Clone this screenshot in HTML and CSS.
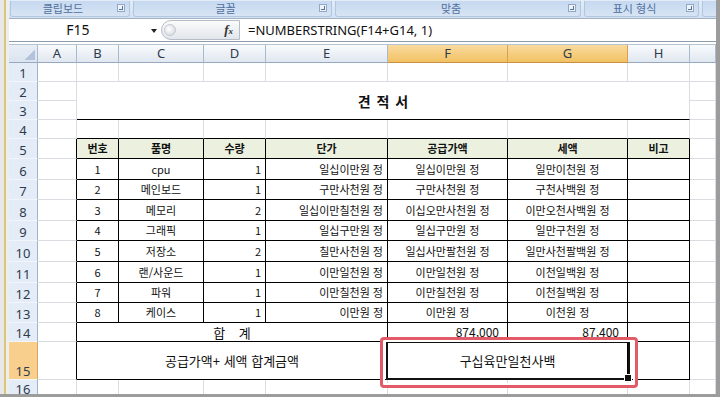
FILE: index.html
```html
<!DOCTYPE html>
<html lang="ko">
<head>
    <meta charset="UTF-8">
    <meta name="viewport" content="width=device-width, initial-scale=1.0">
    <link rel="stylesheet" href="styles.css">
    <title>견적서 - NUMBERSTRING</title>
</head>
<body>
    <div class="window">
        <div class="rail"></div>
        <div class="main">
            <div class="ribbon">
                <div class="group g1">클립보드<i class="launch"></i></div>
                <div class="group g2">글꼴<i class="launch"></i></div>
                <div class="group g3">맞춤<i class="launch"></i></div>
                <div class="group g4">표시 형식<i class="launch"></i></div>
                <div class="group g5"></div>
            </div>
            <div class="formula-bar">
                <div class="namebox">F15<span class="caret"></span></div>
                <div class="fx-pill"><span class="grip"></span><span class="fx">f<small>x</small></span></div>
                <div class="formula">=NUMBERSTRING(F14+G14, 1)</div>
            </div>
            <div class="split"></div>
            <div class="grid-wrap">
            <table class="sheet">
                <colgroup>
                    <col class="w-rh"><col class="w-a"><col class="w-b"><col class="w-c"><col class="w-d">
                    <col class="w-e"><col class="w-f"><col class="w-g"><col class="w-h"><col class="w-i">
                </colgroup>
                <tr class="hd">
                    <th class="corner"></th><th>A</th><th>B</th><th>C</th><th>D</th><th>E</th>
                    <th class="on">F</th><th class="on">G</th><th>H</th><th></th>
                </tr>
                <tr class="r19"><th class="rh">1</th><td></td><td></td><td></td><td></td><td></td><td></td><td></td><td></td><td></td></tr>
                <tr class="r19"><th class="rh">2</th><td></td><td class="title" colspan="7" rowspan="2">견 적 서</td><td></td></tr>
                <tr class="r19"><th class="rh">3</th><td></td><td></td></tr>
                <tr class="r19"><th class="rh">4</th><td></td><td class="top"></td><td class="top"></td><td class="top"></td><td class="top"></td><td class="top"></td><td class="top"></td><td class="top"></td><td></td></tr>
                <tr class="r20">
                    <th class="rh">5</th><td class="edge"></td>
                    <td class="t th">번호</td><td class="t th">품명</td><td class="t th">수량</td><td class="t th">단가</td>
                    <td class="t th">공급가액</td><td class="t th">세액</td><td class="t th">비고</td><td></td>
                </tr>
                <tr class="r21"><th class="rh">6</th><td class="edge"></td><td class="t">1</td><td class="t">cpu</td><td class="t num">1</td><td class="t num">일십이만원 정</td><td class="t">일십이만원 정</td><td class="t">일만이천원 정</td><td class="t"></td><td></td></tr>
                <tr class="r20"><th class="rh">7</th><td class="edge"></td><td class="t">2</td><td class="t">메인보드</td><td class="t num">1</td><td class="t num">구만사천원 정</td><td class="t">구만사천원 정</td><td class="t">구천사백원 정</td><td class="t"></td><td></td></tr>
                <tr class="r21"><th class="rh">8</th><td class="edge"></td><td class="t">3</td><td class="t">메모리</td><td class="t num">2</td><td class="t num">일십이만칠천원 정</td><td class="t">이십오만사천원 정</td><td class="t">이만오천사백원 정</td><td class="t"></td><td></td></tr>
                <tr class="r20"><th class="rh">9</th><td class="edge"></td><td class="t">4</td><td class="t">그래픽</td><td class="t num">1</td><td class="t num">일십구만원 정</td><td class="t">일십구만원 정</td><td class="t">일만구천원 정</td><td class="t"></td><td></td></tr>
                <tr class="r21"><th class="rh">10</th><td class="edge"></td><td class="t">5</td><td class="t">저장소</td><td class="t num">2</td><td class="t num">칠만사천원 정</td><td class="t">일십사만팔천원 정</td><td class="t">일만사천팔백원 정</td><td class="t"></td><td></td></tr>
                <tr class="r21"><th class="rh">11</th><td class="edge"></td><td class="t">6</td><td class="t">랜/사운드</td><td class="t num">1</td><td class="t num">이만일천원 정</td><td class="t">이만일천원 정</td><td class="t">이천일백원 정</td><td class="t"></td><td></td></tr>
                <tr class="r20"><th class="rh">12</th><td class="edge"></td><td class="t">7</td><td class="t">파워</td><td class="t num">1</td><td class="t num">이만칠천원 정</td><td class="t">이만칠천원 정</td><td class="t">이천칠백원 정</td><td class="t"></td><td></td></tr>
                <tr class="r20"><th class="rh">13</th><td class="edge"></td><td class="t">8</td><td class="t">케이스</td><td class="t num">1</td><td class="t num">이만원 정</td><td class="t">이만원 정</td><td class="t">이천원 정</td><td class="t"></td><td></td></tr>
                <tr class="r19">
                    <th class="rh">14</th><td class="edge"></td>
                    <td class="t sum" colspan="4">합 계</td>
                    <td class="t num total">874,000</td><td class="t num total">87,400</td><td class="t"></td><td></td>
                </tr>
                <tr class="r38">
                    <th class="rh on">15</th><td class="edge"></td>
                    <td class="t big" colspan="4">공급가액+ 세액 합계금액</td>
                    <td class="t big picked" colspan="2">구십육만일천사백<span class="sel"></span></td>
                    <td class="t"></td><td></td>
                </tr>
                <tr class="r20"><th class="rh last">16</th><td></td><td></td><td></td><td></td><td></td><td></td><td></td><td></td><td></td></tr>
            </table>
            </div>
        </div>
        <div class="mark"></div>
    </div>
</body>
</html>
```

FILE: styles.css
```css
* {
    box-sizing: border-box;
}

body {
    margin: 0;
    background-color: #fff;
    font-family: 'Noto Sans', 'Noto Sans CJK KR', sans-serif;
    color: #111;
}

.window {
    position: relative;
    display: flex;
    width: 720px;
    height: 397px;
    border-right: 4px solid #9c9c9c;
    border-bottom: 3px solid #9c9c9c;
    overflow: hidden;
}

.rail {
    flex: 0 0 9px;
    background: linear-gradient(to right, #e8e8e8 0 4px, #d8c67a 4px 6px, #eeeeee 6px);
}

.main {
    flex: 1;
    min-width: 0;
    display: flex;
    flex-direction: column;
}

/* ribbon group captions */
.ribbon {
    flex: none;
    height: 19px;
    display: flex;
    gap: 3px;
    padding: 1px 0 0 1px;
    background: linear-gradient(#e3ecf7, #d4e1f1);
    border-bottom: 1px solid #a3b1c3;
    overflow: hidden;
}

.group {
    position: relative;
    flex: none;
    height: 16px;
    padding-right: 14px;
    border: 1px solid #b1c6e0;
    border-top: none;
    border-radius: 0 0 3px 3px;
    background: linear-gradient(#c6d9f0, #d7e4f4);
    font-family: 'Noto Sans CJK KR', sans-serif;
    font-size: 11px;
    line-height: 15px;
    text-align: center;
    color: #4f6f9c;
}

.g1 { width: 120px; }
.g2 { width: 199px; }
.g3 { width: 246px; }
.g4 { width: 115px; }
.g5 { width: 30px; }

.launch {
    position: absolute;
    right: 4px;
    top: 3px;
    width: 8px;
    height: 8px;
    border: 1px solid #93a8c4;
    background-color: #eef3fa;
}

.launch::after {
    content: '';
    position: absolute;
    right: 1px;
    bottom: 1px;
    width: 3px;
    height: 3px;
    border-right: 1px solid #5c7396;
    border-bottom: 1px solid #5c7396;
}

/* formula bar */
.formula-bar {
    flex: none;
    height: 22px;
    display: flex;
    background-color: #fff;
}

.namebox {
    position: relative;
    width: 152px;
    padding-right: 14px;
    font-size: 14px;
    line-height: 22px;
    text-align: center;
}

.caret {
    position: absolute;
    right: 4px;
    top: 10px;
    border-left: 3px solid transparent;
    border-right: 3px solid transparent;
    border-top: 4px solid #222;
}

.fx-pill {
    width: 79px;
    height: 20px;
    margin-top: 1px;
    display: flex;
    align-items: center;
    justify-content: space-between;
    padding: 0 6px 0 2px;
    border: 1px solid #b4bdc8;
    border-radius: 10px 0 0 10px;
    background: linear-gradient(#fbfbfc, #e2e6eb);
}

.grip {
    width: 12px;
    height: 12px;
    border-radius: 50%;
    border: 1px solid #c3cad3;
    background: radial-gradient(circle at 40% 40%, #ffffff, #cdd3db);
}

.fx {
    font-family: 'Liberation Serif', serif;
    font-style: italic;
    font-weight: bold;
    font-size: 13px;
    color: #333;
}

.fx small {
    font-size: 9px;
}

.formula {
    padding-left: 8px;
    font-size: 13px;
    line-height: 22px;
    white-space: nowrap;
}

.split {
    flex: none;
    height: 4px;
    border-top: 1px solid #8e9bad;
    border-bottom: 1px solid #b8c3d0;
}

/* worksheet */
.grid-wrap {
    flex: 1;
    min-height: 0;
    overflow: hidden;
}

.sheet {
    width: 707px;
    table-layout: fixed;
    border-collapse: separate;
    border-spacing: 0;
    font-family: 'Noto Sans CJK KR', sans-serif;
    font-size: 11px;
}

.w-rh { width: 29px; }
.w-a { width: 39px; }
.w-b { width: 42px; }
.w-c { width: 85px; }
.w-d { width: 62px; }
.w-e { width: 122px; }
.w-f { width: 120px; }
.w-g { width: 120px; }
.w-h { width: 62px; }
.w-i { width: 26px; }

.sheet tr.hd { height: 18px; }
.sheet tr.r19 { height: 19px; }
.sheet tr.r20 { height: 20px; }
.sheet tr.r21 { height: 21px; }
.sheet tr.r38 { height: 38px; }

.sheet td {
    padding: 0;
    line-height: 1;
    text-align: center;
    vertical-align: middle;
    white-space: nowrap;
    border-right: 1px solid #d9dce1;
    border-bottom: 1px solid #d9dce1;
}

.hd th {
    padding: 0;
    font-family: 'Noto Sans', sans-serif;
    font-weight: normal;
    font-size: 13px;
    line-height: 1;
    color: #2f3b4b;
    background: linear-gradient(#f9fbfd, #e0e7f0);
    border-right: 1px solid #a9bacd;
    border-bottom: 1px solid #97a9c0;
}

.hd th.on {
    background: linear-gradient(#f9da9f, #f2c264);
    border-right-color: #dca14f;
    border-bottom-color: #c8913f;
}

.hd th.corner {
    background:
        linear-gradient(135deg, transparent 50%, #b3c4da 50%) no-repeat right 2px bottom 2px / 10px 10px,
        linear-gradient(#e8eef6, #dbe4ef);
}

.rh {
    padding: 0 0 1px 0;
    font-family: 'Noto Sans', sans-serif;
    font-weight: normal;
    font-size: 13px;
    line-height: 1;
    color: #2f3b4b;
    text-align: center;
    vertical-align: bottom;
    background-color: #e4ecf7;
    border-right: 1px solid #9fb3cb;
    border-bottom: 1px solid #f2f6fb;
}

.rh.on {
    background-color: #f8cf8c;
    border-right-color: #d9a556;
}

.rh.last {
    vertical-align: top;
    padding: 3px 0 0 0;
}

.sheet td.top {
    border-bottom-color: #000;
}

.sheet td.edge {
    border-right-color: #000;
}

.sheet td.t {
    border-right-color: #000;
    border-bottom-color: #000;
}

.sheet td.th {
    font-weight: bold;
    background-color: #ebf1de;
}

.sheet td.num {
    text-align: right;
    padding-right: 4px;
}

.sheet td.total {
    padding-right: 8px;
    font-size: 12px;
}

.sheet td.title {
    font-size: 14px;
    font-weight: bold;
    word-spacing: 2px;
    border-bottom-color: #000;
}

.sheet td.sum {
    font-size: 13px;
    word-spacing: 10px;
}

.sheet td.big {
    font-size: 13px;
}

.sheet td.picked {
    position: relative;
}

.sel {
    position: absolute;
    left: -2px;
    top: -1px;
    right: -3px;
    bottom: -1px;
    border: 2px solid #111;
}

.sel::after {
    content: '';
    position: absolute;
    right: -4px;
    bottom: -4px;
    width: 6px;
    height: 6px;
    background-color: #111;
    border: 1px solid #fff;
}

/* red highlight drawn over the result cell */
.mark {
    position: absolute;
    left: 380px;
    top: 337px;
    width: 258px;
    height: 51px;
    border: 3px solid #e15c66;
    border-radius: 4px;
    box-shadow: inset 0 0 0 2px #fff;
}
```
